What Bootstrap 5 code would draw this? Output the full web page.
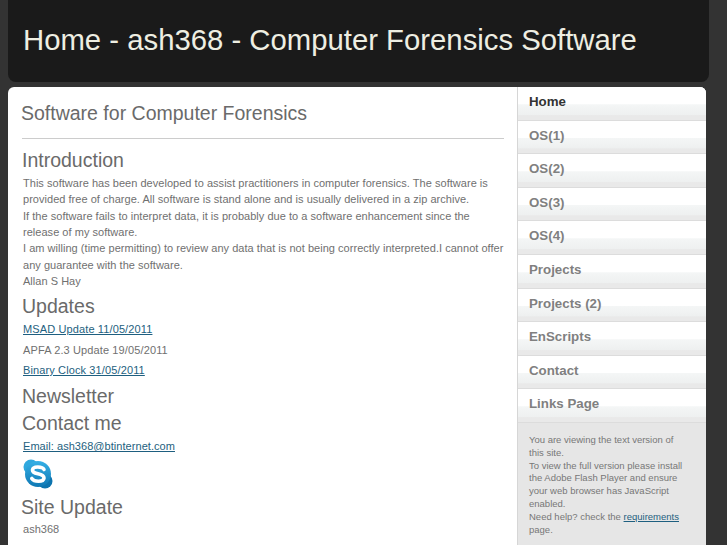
<!DOCTYPE html>
<html lang="en">
<head>
<meta charset="utf-8">
<title>Home - ash368 - Computer Forensics Software</title>
<link href="https://cdn.jsdelivr.net/npm/bootstrap@5.3.0/dist/css/bootstrap.min.css" rel="stylesheet">
<style>
html,body{height:545px;overflow:hidden;background:#333;}
body{font-family:"Liberation Sans",Arial,sans-serif;color:#666;}
a{color:#1e5f80;}
.site-head{width:701px;height:82px;margin-left:8px;background:#1a1a1a;border-radius:0 0 8px 8px;padding-left:15px;}
.site-head h1{font-size:29.3px;font-weight:400;line-height:80px;margin:0;color:#eeeee2;font-family:inherit;}
.site-wrap{width:698px;margin:5px 0 0 8px;height:470px;background:#fff;border-radius:6px 6px 0 0;overflow:hidden;}
.main-col{width:509px;flex:none;padding:0 12px 0 13px;}
.side-col{width:189px;flex:none;background:#e6e6e6;border-left:1px solid #d6d6d6;}
.main-col h2,.main-col h3{font-size:19.5px;font-weight:400;color:#6a6a6a;line-height:24px;font-family:inherit;}
.main-col h2.h-top{margin:14px 0 0;}
.main-col hr{margin:13px 1px 0 1px;border:0;border-top:1px solid #ccc;opacity:1;}
.main-col h3{margin:0 0 0 1px;}
.main-col h3.h-intro{margin-top:9px;}
.main-col h3.h-upd{margin-top:4.7px;}
.main-col h3.h-news{margin-top:5.7px;}
.main-col h3.h-cont{margin-top:3px;}
.main-col h2.h-site{margin:6px 0 0;}
.copy{font-size:11px;line-height:16.33px;letter-spacing:.03px;margin:3px 0 0 2px;color:#707070;}
.copy.tail{margin-top:2px;}
.upd{font-size:11px;line-height:16px;letter-spacing:.12px;margin:0 0 4.7px 2px;color:#707070;}
.upd.first{margin-top:3px;}
.upd.mail{letter-spacing:.05px;}
.skype-mark{display:block;margin:5px 0 0 2px;}
.menu-link{display:block;height:33.6px;line-height:29px;padding-left:11px;font-size:13.3px;font-weight:700;color:#808080;text-decoration:none;background:linear-gradient(#fff 0,#fff 50%,#f4f6f6 52%,#eef0f0 82%,#e9e9e9 84%,#e9e9e9 97%,#dcdcdc 97%);}
.menu-link.now{color:#333;}
.side-note{font-size:9.5px;line-height:12.8px;padding:11px 22px 0 11px;color:#777;}
</style>
</head>
<body>
<header class="site-head"><h1>Home - ash368 - Computer Forensics Software</h1></header>
<div class="site-wrap d-flex">
  <main class="main-col">
    <h2 class="h-top">Software for Computer Forensics</h2>
    <hr>
    <h3 class="h-intro">Introduction</h3>
    <p class="copy">This software has been developed to assist practitioners in computer forensics. The software is provided free of charge. All software is stand alone and is usually delivered in a zip archive.<br>If the software fails to interpret data, it is probably due to a software enhancement since the release of my software.<br>I am willing (time permitting) to review any data that is not being correctly interpreted.I cannot offer any guarantee with the software.<br>Allan S Hay</p>
    <h3 class="h-upd">Updates</h3>
    <p class="upd first"><a href="#">MSAD Update 11/05/2011</a></p>
    <p class="upd">APFA 2.3 Update 19/05/2011</p>
    <p class="upd"><a href="#">Binary Clock 31/05/2011</a></p>
    <h3 class="h-news">Newsletter</h3>
    <h3 class="h-cont">Contact me</h3>
    <p class="upd first mail mb-0"><a href="#">Email: ash368@btinternet.com</a></p>
    <svg class="skype-mark" width="30" height="30" viewBox="0 0 30 30" aria-hidden="true">
      <defs><linearGradient id="sk" x1="0" y1="0" x2="0" y2="1"><stop offset="0" stop-color="#35b0e6"/><stop offset="1" stop-color="#0f78b4"/></linearGradient></defs>
      <circle cx="8" cy="8" r="7.500" fill="#2fa8de"/><circle cx="22" cy="22" r="7.500" fill="#0d74ae"/><circle cx="15" cy="15" r="13" fill="url(#sk)"/>
      <path d="M21 10.500C19.500 7.500 10 6.800 9.500 11 9.200 16 21 13.500 21 19 20.500 23.500 11 23 8.800 19.500" fill="none" stroke="#fff" stroke-width="3.600" stroke-linecap="round"/>
    </svg>
    <h2 class="h-site">Site Update</h2>
    <p class="copy tail">ash368</p>
  </main>
  <aside class="side-col">
    <a class="menu-link now" href="#">Home</a>
    <a class="menu-link" href="#">OS(1)</a>
    <a class="menu-link" href="#">OS(2)</a>
    <a class="menu-link" href="#">OS(3)</a>
    <a class="menu-link" href="#">OS(4)</a>
    <a class="menu-link" href="#">Projects</a>
    <a class="menu-link" href="#">Projects (2)</a>
    <a class="menu-link" href="#">EnScripts</a>
    <a class="menu-link" href="#">Contact</a>
    <a class="menu-link" href="#">Links Page</a>
    <div class="side-note">You are viewing the text version of this site.<br>To view the full version please install the Adobe Flash Player and ensure your web browser has JavaScript enabled.<br>Need help? check the <a href="#">requirements</a> page.</div>
  </aside>
</div>
<script src="https://cdn.jsdelivr.net/npm/bootstrap@5.3.0/dist/js/bootstrap.bundle.min.js"></script>
</body>
</html>
